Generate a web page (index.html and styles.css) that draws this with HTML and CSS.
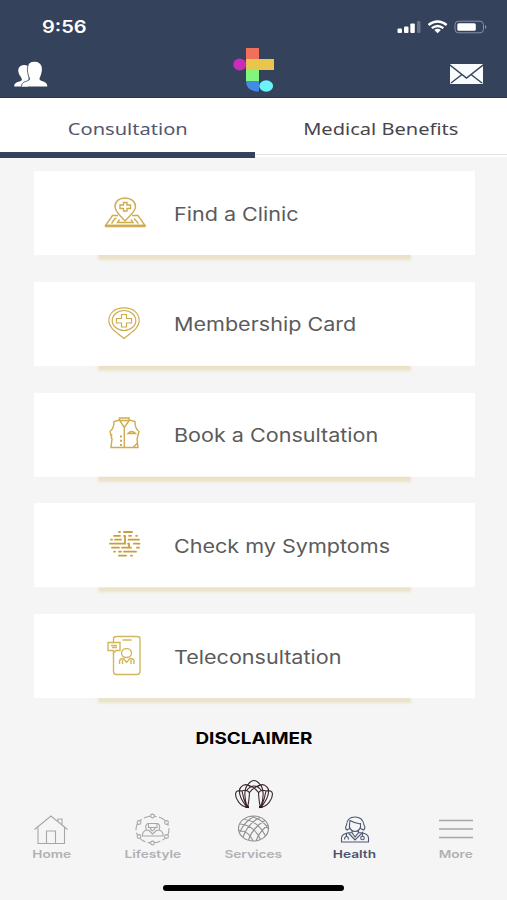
FILE: index.html
```html
<!DOCTYPE html>
<html lang="en">
<head>
<meta charset="utf-8">
<title>Health</title>
<link rel="stylesheet" href="styles.css">
</head>
<body>
<div class="app">
  <header class="header">
    <div class="status">
      <span class="time wide">9:56</span>
      <svg class="signals" width="92" height="14" viewBox="0 0 92 14">
        <g fill="#fff"><rect x="0.500" y="8.500" width="4.500" height="4.500" rx="1"/><rect x="7" y="6.500" width="4.500" height="6.500" rx="1"/><rect x="13.300" y="3.500" width="4.500" height="9.500" rx="1"/><rect x="20" y="1" width="3.500" height="12" rx="1" opacity=".25"/></g>
        <g fill="none" stroke="#fff" stroke-width="2.300"><path d="M31.500 5Q40.500-2 49.700 5"/><path d="M34.800 8.200Q40.500 3.700 46.400 8.200"/></g>
        <path d="M37.300 10Q40.600 7.700 43.900 10L40.600 13.200Z" fill="#fff"/>
        <rect x="58" y="1.200" width="28.500" height="11.600" rx="3.500" fill="none" stroke="#8691a2"/>
        <rect x="60.300" y="3.200" width="18.500" height="7.600" rx="1.600" fill="#fff"/>
        <path d="M88 5Q91 7 88 9Z" fill="#8691a2"/>
      </svg>
    </div>
    <div class="bar">
      <svg width="34" height="26" viewBox="0 0 34 26">
        <path d="M.2 25.500C.2 21 4 21.500 7.500 19.500C8.500 18.500 7.500 17.500 6.500 15.500C3 11 3 4 10.500 4C15 4 16 8 15 12L14 25.500Z" fill="#fff"/>
        <path d="M7.500 25.500C7.500 20.500 12 21 15 19C16 18 15.500 17 14.500 15C12 9 12 .8 20.500 .8C29 .8 29 9 26.500 15C25.500 17 25 18 26 19C29 21 33.300 20.500 33.300 25.500Z" fill="#fff"/>
        <path d="M7.500 25.500C7.500 20.500 12 21 15 19C16 18 15.500 17 14.500 15C13 10 13 6 14.500 3.500" fill="none" stroke="#34435b" stroke-width=".8"/>
      </svg>
      <svg class="logo" width="42" height="45" viewBox="0 0 42 45">
        <path fill="#f0705a" d="M13 0h13v11.500H13z"/><path fill="#e9c54d" d="M13 11h28v11H13z"/><path fill="#80f77c" d="M13 22h13v11H13z"/><path fill="#4389e6" d="M13 33h13v10.500h-2Q13 43 13 33Z"/>
        <ellipse cx="6.700" cy="16.500" rx="6.500" ry="6" fill="#c92cb8"/><ellipse cx="33.200" cy="38" rx="6.900" ry="5.700" fill="#6cf2fa"/>
      </svg>
      <svg width="33" height="20" viewBox="0 0 33 20">
        <rect width="33" height="20" rx="1" fill="#f9fcff"/><path d="M0 1L16.500 14L33 1M1 19L12 10.500M32 19L21 10.500" fill="none" stroke="#34435b" stroke-width="1.400"/>
      </svg>
    </div>
  </header>
  <nav class="tabs">
    <div class="tab active"><span class="wide">Consultation</span></div>
    <div class="tab"><span class="wide">Medical Benefits</span></div>
  </nav>
  <main class="cards">
    <div class="card">
      <svg class="icon" width="44" height="44" viewBox="0 0 44 44">
        <path d="M21 30C17 25 11 21 11 15.500C11 10.500 15 7 21 7S31.500 10.500 31.500 15.500C31.500 21 25 25 21 30Z"/><path d="M19.500 11.500h3.500v2.500h3.500v3.500h-3.500v2.500h-3.500v-2.500H16v-3.500h3.500z"/><path d="M14 24.500H8.500L1.500 34.500H41L34 24.500H28M12.500 27.500H11L7.500 32.500M30 27.500L34.500 32.500M15.500 28.500L13.500 31.500H29L27 28.500"/><path d="M1 35h40.500" stroke-width="2.400"/>
      </svg>
      <span class="label wide">Find a Clinic</span>
    </div>
    <div class="card">
      <svg class="icon thin" width="44" height="44" viewBox="0 0 44 44">
        <path d="M20 36.500C14 31 4.800 26.500 4.800 19C4.800 11 11 5.800 20 5.800S35.200 11 35.200 19C35.200 26.500 26 31 20 36.500Z"/><ellipse cx="20" cy="18.500" rx="11.800" ry="10"/><path d="M17.500 12.500h5v4h5v4.500h-5v4h-5v-4h-5v-4.500h5z"/>
      </svg>
      <span class="label wide">Membership Card</span>
    </div>
    <div class="card">
      <svg class="icon" width="44" height="44" viewBox="0 0 44 44">
        <path d="M15.500 5H25V7.500H15.500ZM15.500 7L10 8.500C10 13 8 17 6 18.500L8 26L7 34.500H34L33 26L35 18.500C32.500 17 31 13 31 8.500L25.500 7L20.300 14.500ZM20.300 14.500V34.500M24 20.500Q27.500 16.500 31.500 20.500ZM7.500 21v5M33.500 30l-4.500 4.500"/><path d="M17 22.500v11" stroke-dasharray="2 2.300" stroke-width="2"/>
      </svg>
      <span class="label wide">Book a Consultation</span>
    </div>
    <div class="card">
      <svg class="icon dense" width="44" height="44" viewBox="0 0 44 44">
        <path d="M15 9h1M20 9h8M10 12.800h6M20 12.800h1M25 12.800h2M32 12.800h1M7 16.700h1M11 16.700h6M21 12.800v8M24.500 16.700h10.500M6 20.700h14M24 20.700h1M30 20.700h5.500M8 24.700h7M18 24.700h9M33 24.700h2M10 28.700h1M15 28.700h2M20 28.700h12M15 32.700h7M27 32.700h1M11 20.700h10M25 20.700v4"/>
      </svg>
      <span class="label wide">Check my Symptoms</span>
    </div>
    <div class="card">
      <svg class="icon phone" width="44" height="44" viewBox="0 0 44 44">
        <path d="M9.500 8V5Q9.500 2.500 12.500 2.500H33Q36 2.500 36 5V37.500Q36 40.500 33 40.500H12.500Q9.500 40.500 9.500 37.500V19M18.500 6h9"/><path d="M4 8.500H16V16.500H12L9.500 19V16.500H4ZM7 11.500h6M8 13.500h5"/><ellipse cx="22.500" cy="19" rx="5" ry="4.500"/><path d="M15.500 30V27Q16 24.500 19.500 24.500L22.500 28.500L26 24.500Q30 24.500 30 27V30M18.500 26v4M27 26v4"/>
      </svg>
      <span class="label wide">Teleconsultation</span>
    </div>
  </main>
  <div class="disclaimer"><span class="wide">DISCLAIMER</span></div>
  <svg class="shell" width="40" height="32" viewBox="0 0 40 32">
    <g fill="none" stroke="#3a252f" stroke-width="1.100"><path d="M13.500 29.500C6 28 1.500 21 1.500 16Q2 11.500 8 13C9 20 11 25 13.500 29.500ZM13.500 29.500C5 20 4 12 7 9Q11 4.500 16.500 8.500M13.500 29.500C9 18 11 9 14 6.500Q20-1.500 26 6.500C29 9 31 18 26.500 29.500M8 13Q12 11 15.500 14.500Q15 24 13.500 29.500M26.500 29.500C34 28 38.500 21 38.500 16Q38 11.500 32 13C31 20 29 25 26.500 29.500ZM26.500 29.500C35 20 36 12 33 9Q29 4.500 23.500 8.500M32 13Q28 11 24.500 14.500Q25 24 26.500 29.500"/><path d="M15.500 14.500Q19 9.500 25 7.500M24.500 14.500Q21 9.500 15 7.500M12 13Q20 3 28 13"/></g>
    <path d="M11.500 29h3.500M25 29h3.500" stroke="#3a1525" stroke-width="2"/>
  </svg>
  <nav class="bottom">
    <div class="item"><svg width="38" height="34" viewBox="0 0 38 34"><path d="M1.500 17.500L18 4L34.500 17.500M5 15.500V31.500H31.500V15.500M13.500 31.500V19H22.500V31.500M25 9.500V7H29V12.500"/></svg><span class="wide">Home</span></div>
    <div class="item"><svg width="38" height="34" viewBox="0 0 38 34"><ellipse cx="18.500" cy="17.500" rx="16.500" ry="13.500" stroke-dasharray="13 2.400"/><g fill="#f5f5f5"><circle cx="18.500" cy="4" r="1.900"/><circle cx="5" cy="10.500" r="1.900"/><circle cx="32.500" cy="10.500" r="1.900"/><circle cx="5" cy="24.500" r="1.900"/><circle cx="32.500" cy="24.500" r="1.900"/><circle cx="18.500" cy="31" r="1.900"/></g><path d="M8.500 24Q8 19.500 12.500 18Q10.500 13 14 11.500H23.500Q27 13 25 18Q29.500 19.500 29 24ZM14.500 11.500V15.500H23V11.500M16 15.500Q18.500 22 21.500 15.500M12.500 18L15 18.500L18.500 22L22.500 18.500L25 18"/></svg><span class="wide">Lifestyle</span></div>
    <div class="item"><svg class="globe" width="38" height="34" viewBox="0 0 38 34"><ellipse cx="18.500" cy="16.500" rx="15" ry="12.500"/><path d="M9.500 7.500Q23 9 30.500 24M5 12Q19 13 25.500 27.500M4 18.500Q14 19 18 29M16 4.500Q28 7 33.500 17M5 20Q9 10 19 4.500M8 25Q13 11 25 5.500M13.500 28Q18 15 30 8.500M21 29Q24 20 33 13"/></svg><span class="wide">Services</span></div>
    <div class="item on"><svg width="38" height="34" viewBox="0 0 38 34"><path d="M11 18Q8.500 16.500 10.500 13C11 7 14 5 19 5S27 7 28 13Q30 16 27.500 18L24.500 16.500V12Q18 11 14 8.500Q13.500 11 13.500 16.500ZM13.500 12V15Q15 19.500 19 19.500T24.500 15V11M16 18.500V20.500L19 25L22.500 20.500V18.500M16 20.500Q5.500 21 5.500 26V30H32.500V26Q32.500 21 22.500 20.500M10.500 21.500V25M8.500 27.500Q8.500 24.500 10.500 24.500T12.500 27.500M12 20.500L19 28L26.500 20.500V24"/><circle cx="26.500" cy="26" r="1.800"/></svg><span class="wide">Health</span></div>
    <div class="item"><svg width="38" height="34" viewBox="0 0 38 34"><path d="M2 8.500H36M2 17H36M2 25.500H36" stroke-width="1.500"/></svg><span class="wide">More</span></div>
  </nav>
  <div class="home-line"></div>
</div>
</body>
</html>
```
FILE: styles.css
```css
* { box-sizing: border-box; }
body { margin: 0; background: #f5f5f5; font-family: Inter, "Liberation Sans", sans-serif; }
.app { height: 900px; display: flex; flex-direction: column; overflow: hidden; }
.wide { display: inline-block; white-space: nowrap; transform: scaleX(1.18); }
.header { height: 98px; background: #34435b; border-bottom: 1px solid #29364f; flex: none; }
.status { height: 46px; padding: 16px 18px 0 42px; display: flex; justify-content: space-between; }
.time { color: #fff; font-size: 17px; line-height: 23px; font-weight: 600; transform-origin: left; transform: scaleX(1.18); }
.signals { margin: 4px 0 0; }
.bar { height: 46px; padding: 2px 24px 0 14px; display: grid; grid-template-columns: 219px 42px 1fr; }
.bar svg:first-child { margin-top: 13px; }
.bar svg:last-child { margin-top: 16px; justify-self: end; }
.tabs { height: 59px; display: flex; background: #fff; flex: none; }
.tab { flex: 1; height: 57px; border-bottom: 1px solid #e2e2e2; text-align: center; font: 17px/61px "Noto Sans", sans-serif; color: #47464b; }
.tab.active { height: 60px; padding-left: 2px; border-bottom: 6px solid #34435b; color: #535770; }
.cards { padding: 14px 32px 0 33.5px; display: flex; flex-direction: column; gap: 26.8px; }
.card { height: 84px; position: relative; display: flex; align-items: center; padding-left: 70.5px; background: #fff; }
.card::after { content: ""; position: absolute; left: 65px; width: 311px; top: 84px; height: 4px; background: linear-gradient(#e8e0c6, #ece5cf); box-shadow: 0 0 3px 1px #ece4ca; clip-path: inset(0 -4px -5px -4px); }
.icon { fill: none; stroke: #cfac4f; stroke-width: 1.4; }
.icon.thin { stroke-width: 1.2; }
.icon.dense { stroke: #c99d38; stroke-width: 1.8; stroke-linecap: round; }
.icon.phone { stroke: #d3b75c; }
.label { margin: 1px 0 0 26px; font-size: 18.5px; line-height: 24px; color: #5b5b5b; transform-origin: left; transform: scaleX(1.165); }
.disclaimer { margin-top: 28.4px; height: 24px; line-height: 24px; text-align: center; font-size: 15.5px; font-weight: 700; color: #000; }
.disclaimer .wide { transform: scaleX(1.22); }
.shell { display: block; margin: 27px auto 0; flex: none; }
.bottom { margin-top: 2px; display: grid; grid-template-columns: repeat(5, 101px); justify-content: center; }
.item { display: flex; flex-direction: column; align-items: center; font-size: 11px; line-height: 14px; font-weight: 600; color: #b1b1b3; }
.item svg { fill: none; stroke: #a7a7a9; stroke-width: 1.1; }
.item .globe { stroke: #929294; stroke-width: 1.2; }
.item.on { color: #4c536d; }
.item.on svg { stroke: #4c5872; }
.item span { margin-top: 1px; transform: scaleX(1.24); }
.home-line { width: 181px; height: 6px; border-radius: 3px; background: #000; margin: 24px auto 0; }
```
